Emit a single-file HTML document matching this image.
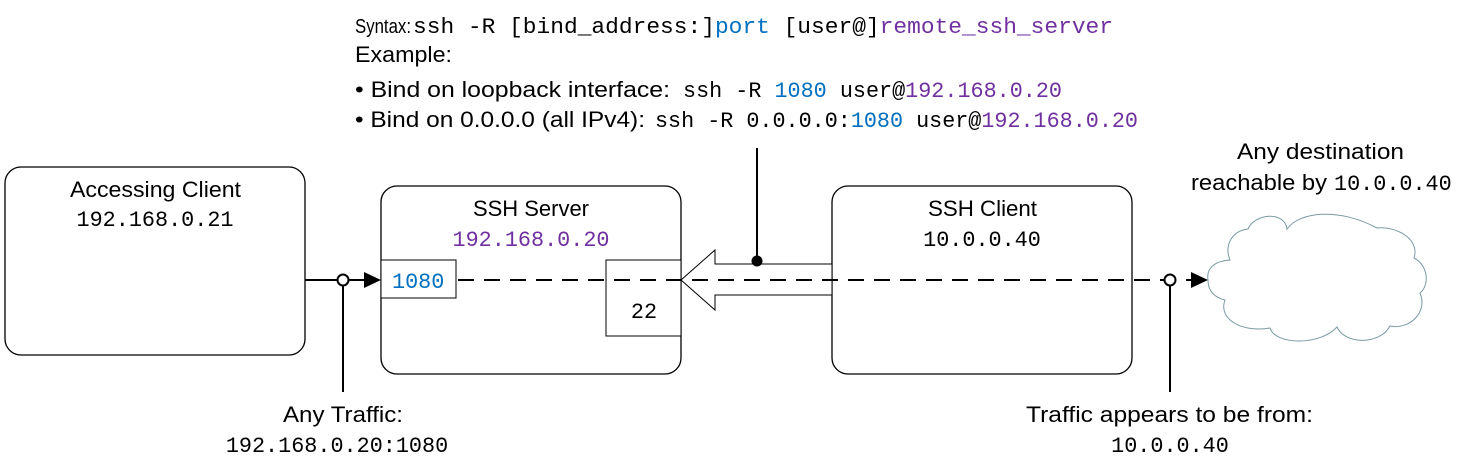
<!DOCTYPE html>
<html><head><meta charset="utf-8"><style>
html,body{margin:0;padding:0;background:#fff;}
svg{display:block}
.s{font-family:"Liberation Sans",sans-serif;font-size:22px;fill:#000}
.m{font-family:"Liberation Mono",monospace;font-size:21.8px;fill:#000}
.b{fill:#0070c0}.p{fill:#7030a0}
</style></head><body>
<svg width="1468" height="472" viewBox="0 0 1468 472" xmlns="http://www.w3.org/2000/svg">
<text class="s" x="355" y="33" style="font-size:20px" textLength="56" lengthAdjust="spacingAndGlyphs">Syntax:</text>
<text class="m" x="413" y="33" textLength="700" lengthAdjust="spacingAndGlyphs">ssh -R [bind_address:]<tspan class="b">port</tspan> [user@]<tspan class="p">remote_ssh_server</tspan></text>
<text class="s" x="355" y="62" textLength="97" lengthAdjust="spacingAndGlyphs">Example:</text>
<text class="s" x="355" y="97" textLength="315" lengthAdjust="spacingAndGlyphs">• Bind on loopback interface:</text>
<text class="m" x="683" y="97" textLength="379" lengthAdjust="spacingAndGlyphs">ssh -R <tspan class="b">1080</tspan> user@<tspan class="p">192.168.0.20</tspan></text>
<text class="s" x="355" y="127" textLength="290" lengthAdjust="spacingAndGlyphs">• Bind on 0.0.0.0 (all IPv4):</text>
<text class="m" x="655" y="127" textLength="483" lengthAdjust="spacingAndGlyphs">ssh -R 0.0.0.0:<tspan class="b">1080</tspan> user@<tspan class="p">192.168.0.20</tspan></text>

<g fill="#fff" stroke="#000" stroke-width="1.3">
<rect x="5" y="167" width="300" height="188" rx="16"/>
<rect x="381" y="186" width="300" height="188" rx="16"/>
<rect x="832" y="186" width="300" height="188" rx="16"/>
</g>
<text class="s" x="70" y="197" textLength="171" lengthAdjust="spacingAndGlyphs">Accessing Client</text>
<text class="m" x="155" y="226" text-anchor="middle">192.168.0.21</text>
<text class="s" x="473" y="216" textLength="116" lengthAdjust="spacingAndGlyphs">SSH Server</text>
<text class="m p" x="531" y="246" text-anchor="middle">192.168.0.20</text>
<text class="s" x="928" y="216" textLength="109" lengthAdjust="spacingAndGlyphs">SSH Client</text>
<text class="m" x="982" y="246" text-anchor="middle">10.0.0.40</text>

<rect x="381" y="260" width="75" height="38" fill="#fff" stroke="#000" stroke-width="1"/>
<text class="m b" x="392" y="288">1080</text>
<rect x="606" y="260" width="75" height="76" fill="#fff" stroke="#000" stroke-width="1"/>
<text class="m" x="644" y="318" text-anchor="middle">22</text>

<path d="M681 280 L715 250 L715 264 L832 264 L832 295 L715 295 L715 310 Z" fill="#fff" stroke="#000" stroke-width="1"/>
<line x1="757" y1="148" x2="757" y2="261" stroke="#000" stroke-width="2"/>
<circle cx="757" cy="261" r="5.5" fill="#000"/>

<line x1="305" y1="280" x2="366" y2="280" stroke="#000" stroke-width="2"/>
<path d="M381 280 L364 272 L364 288 Z" fill="#000"/>
<line x1="343" y1="285" x2="343" y2="392" stroke="#000" stroke-width="2"/>
<circle cx="343" cy="280" r="5.5" fill="#fff" stroke="#000" stroke-width="2"/>
<line x1="458" y1="280" x2="1192" y2="280" stroke="#000" stroke-width="2" stroke-dasharray="16,10"/>
<path d="M1208 280 L1191 272 L1191 288 Z" fill="#000"/>
<line x1="1170" y1="285" x2="1170" y2="392" stroke="#000" stroke-width="2"/>
<circle cx="1170" cy="280" r="5.5" fill="#fff" stroke="#000" stroke-width="2"/>

<path d="M1208 280 C1206 268 1215 261 1230 260 C1224 245 1232 231 1248 229 C1255 213 1285 211 1287 229 C1300 211 1340 208 1377 228 C1398 226 1420 240 1414 258 C1428 265 1430 285 1420 293 C1428 312 1410 330 1390 326 C1380 345 1345 345 1337 327 C1320 346 1275 345 1270 328 C1240 333 1218 318 1225 300 C1213 297 1208 290 1208 280 Z" fill="#fff" stroke="#7a9ba3" stroke-width="1"/>

<text class="s" x="1237" y="159" textLength="167" lengthAdjust="spacingAndGlyphs">Any destination</text>
<text class="s" x="1191" y="190" textLength="136" lengthAdjust="spacingAndGlyphs">reachable by</text>
<text class="m" x="1334" y="190">10.0.0.40</text>
<text class="s" x="283" y="422" textLength="120" lengthAdjust="spacingAndGlyphs">Any Traffic:</text>
<text class="m" x="337" y="452" text-anchor="middle">192.168.0.20:1080</text>
<text class="s" x="1026" y="422" textLength="287" lengthAdjust="spacingAndGlyphs">Traffic appears to be from:</text>
<text class="m" x="1170" y="452" text-anchor="middle">10.0.0.40</text>
</svg>
</body></html>
